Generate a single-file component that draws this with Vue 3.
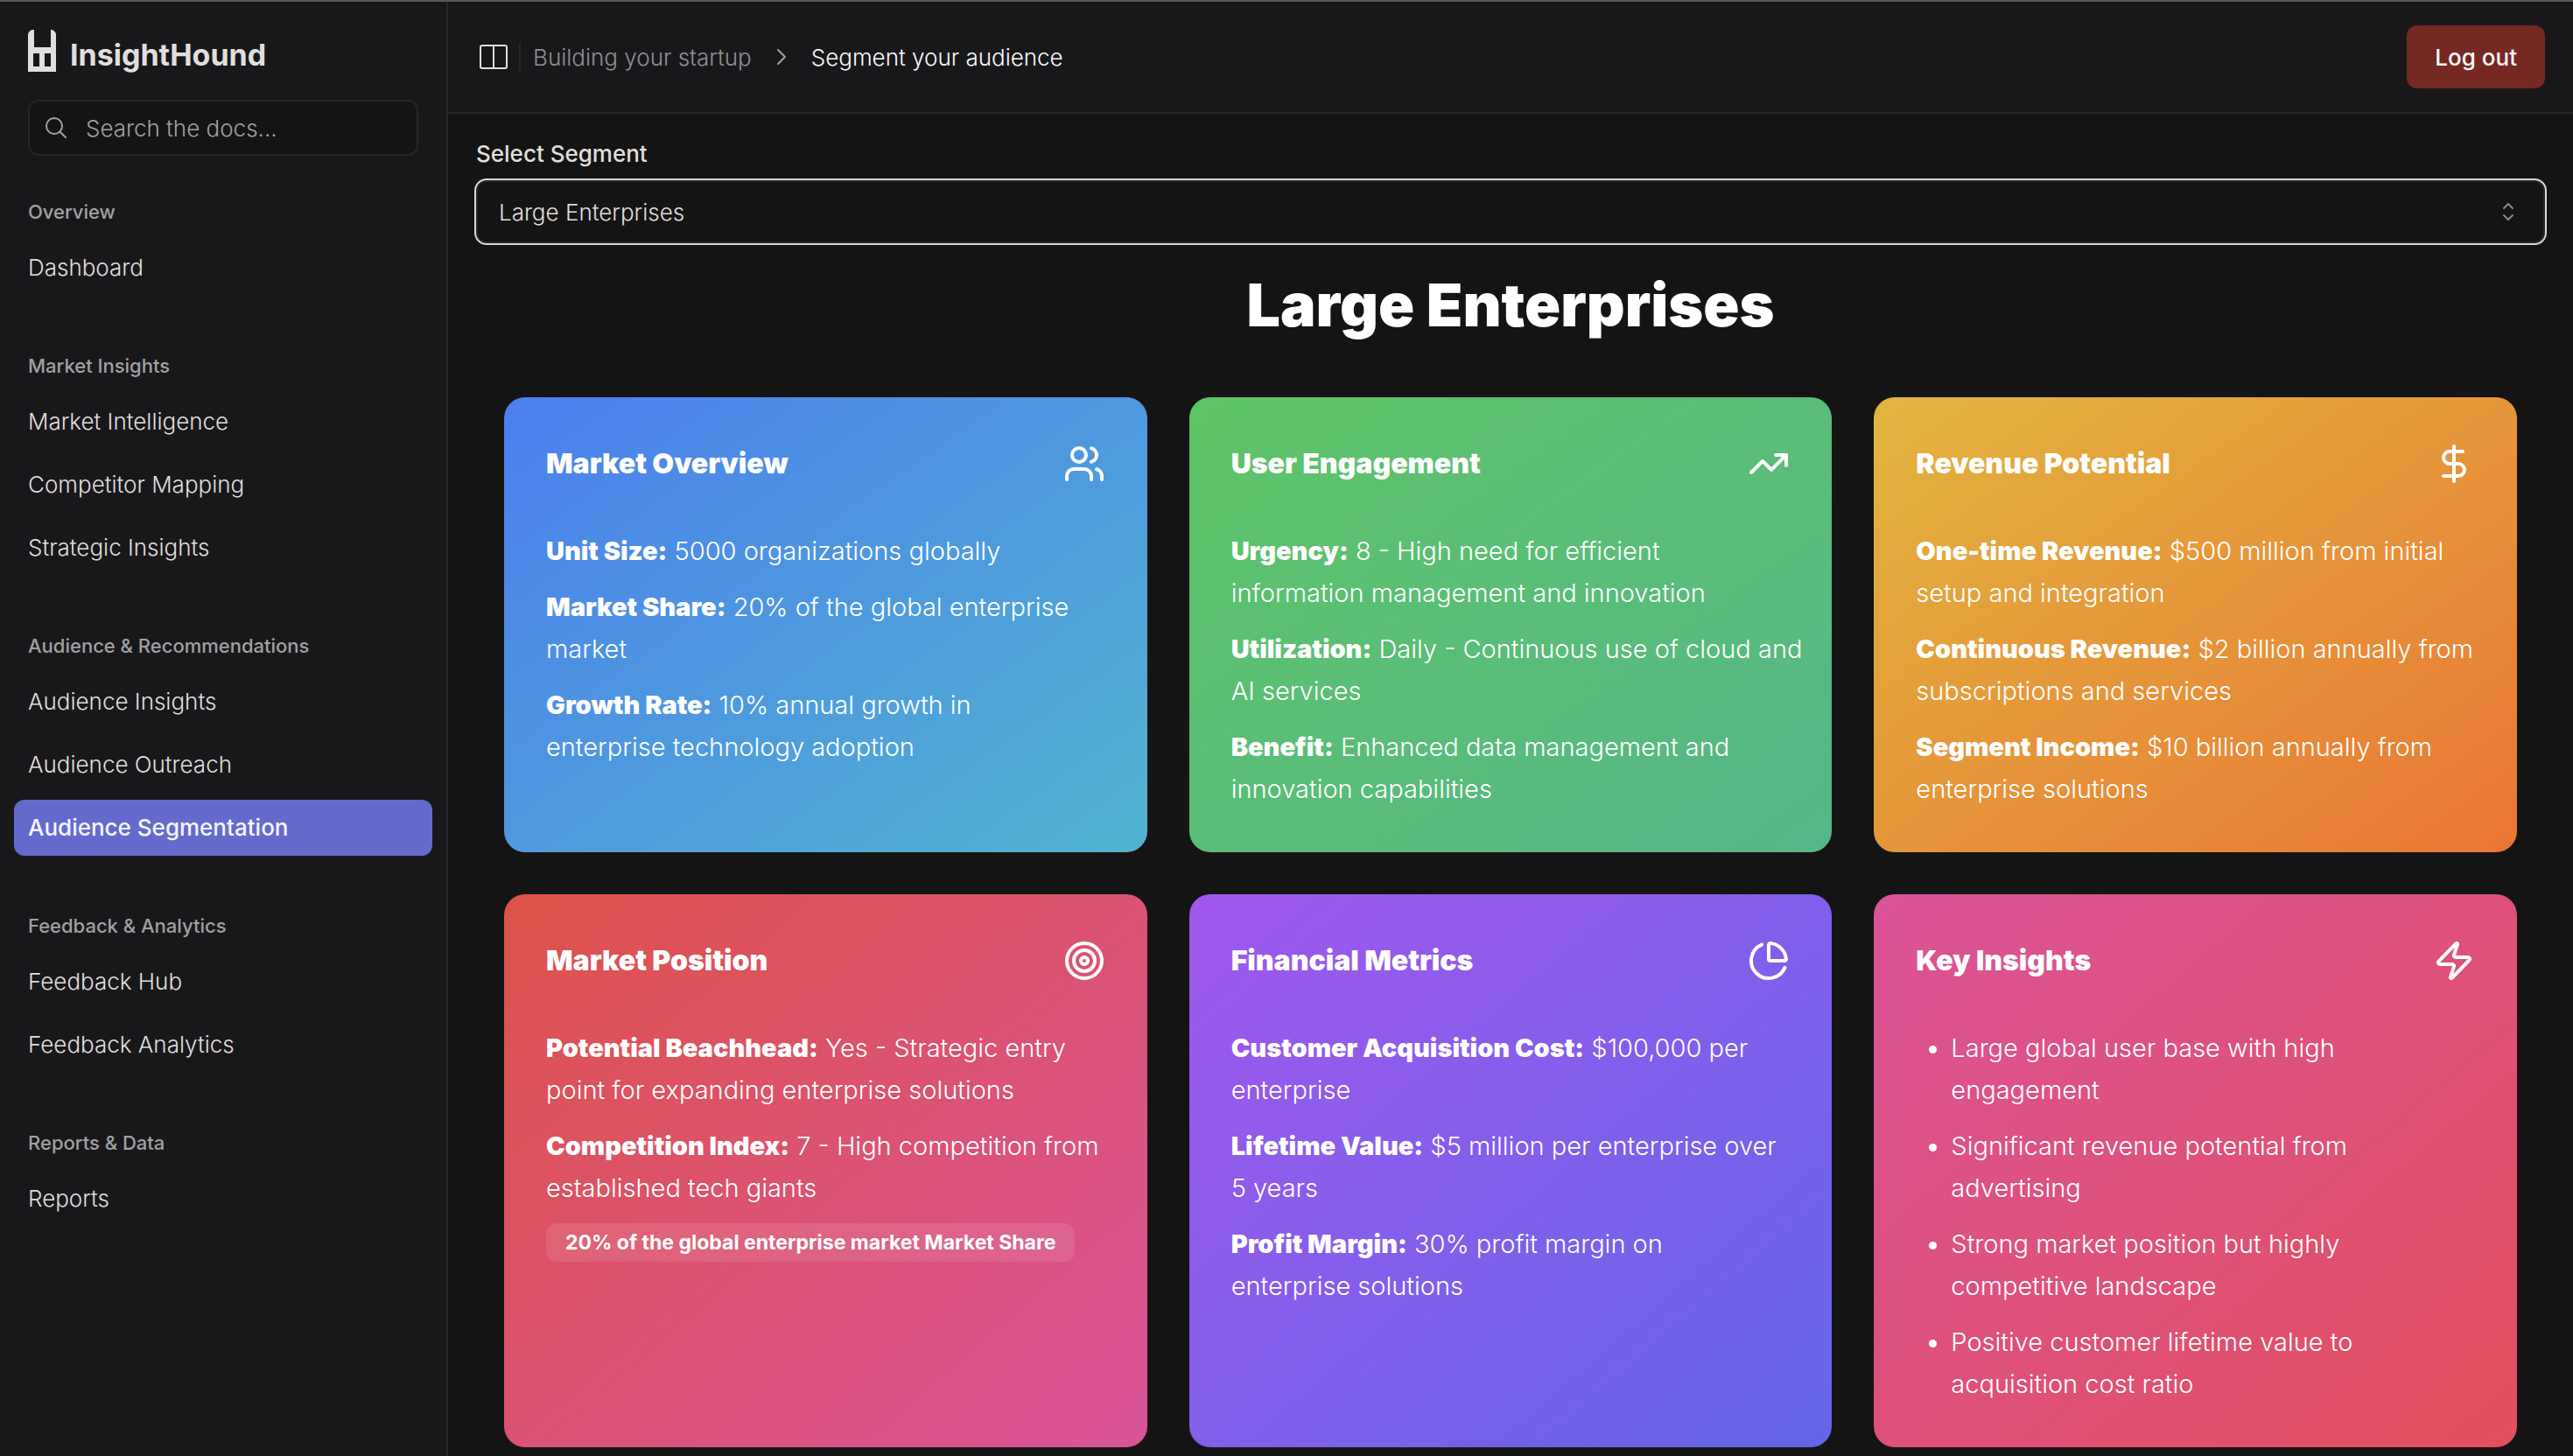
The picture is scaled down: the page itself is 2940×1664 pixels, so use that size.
<script setup>
import { ref } from 'vue'

const segment = ref('Large Enterprises')
const segments = ['Large Enterprises']
const search = ref('')

const nav = [
  { title: 'Overview', items: ['Dashboard'] },
  { title: 'Market Insights', items: ['Market Intelligence', 'Competitor Mapping', 'Strategic Insights'] },
  { title: 'Audience & Recommendations', items: ['Audience Insights', 'Audience Outreach', 'Audience Segmentation'] },
  { title: 'Feedback & Analytics', items: ['Feedback Hub', 'Feedback Analytics'] },
  { title: 'Reports & Data', items: ['Reports'] }
]
const current = 'Audience Segmentation'

const cards = [
  {
    title: 'Market Overview',
    tone: 'blue',
    icon: ['M16 21v-2a4 4 0 0 0-4-4H6a4 4 0 0 0-4 4v2', 'M9 3a4 4 0 1 0 0 8a4 4 0 1 0 0-8', 'M22 21v-2a4 4 0 0 0-3-3.87', 'M16 3.13a4 4 0 0 1 0 7.75'],
    facts: [
      ['Unit Size:', '5000 organizations globally'],
      ['Market Share:', '20% of the global enterprise\nmarket'],
      ['Growth Rate:', '10% annual growth in\nenterprise technology adoption']
    ]
  },
  {
    title: 'User Engagement',
    tone: 'green',
    icon: ['M22 7 13.5 15.5 8.5 10.5 2 17', 'M16 7h6v6'],
    facts: [
      ['Urgency:', '8 - High need for efficient\ninformation management and innovation'],
      ['Utilization:', 'Daily - Continuous use of cloud and\nAI services'],
      ['Benefit:', 'Enhanced data management and\ninnovation capabilities']
    ]
  },
  {
    title: 'Revenue Potential',
    tone: 'amber',
    icon: ['M12 2v20', 'M17 5H9.5a3.5 3.5 0 0 0 0 7h5a3.5 3.5 0 0 1 0 7H6'],
    facts: [
      ['One-time Revenue:', '$500 million from initial\nsetup and integration'],
      ['Continuous Revenue:', '$2 billion annually from\nsubscriptions and services'],
      ['Segment Income:', '$10 billion annually from\nenterprise solutions']
    ]
  },
  {
    title: 'Market Position',
    tone: 'red',
    icon: ['M12 2a10 10 0 1 0 0 20a10 10 0 1 0 0-20', 'M12 6a6 6 0 1 0 0 12a6 6 0 1 0 0-12', 'M12 10a2 2 0 1 0 0 4a2 2 0 1 0 0-4'],
    facts: [
      ['Potential Beachhead:', 'Yes - Strategic entry\npoint for expanding enterprise solutions'],
      ['Competition Index:', '7 - High competition from\nestablished tech giants']
    ],
    badge: '20% of the global enterprise market Market Share'
  },
  {
    title: 'Financial Metrics',
    tone: 'purple',
    icon: ['M21 12c.552 0 1.005-.449.95-.998a10 10 0 0 0-8.953-8.951c-.55-.055-.998.398-.998.95v8a1 1 0 0 0 1 1z', 'M21.21 15.89A10 10 0 1 1 8 2.83'],
    facts: [
      ['Customer Acquisition Cost:', '$100,000 per\nenterprise'],
      ['Lifetime Value:', '$5 million per enterprise over\n5 years'],
      ['Profit Margin:', '30% profit margin on\nenterprise solutions']
    ]
  },
  {
    title: 'Key Insights',
    tone: 'pink',
    icon: ['M4 14a1 1 0 0 1-.78-1.63l9.9-10.2a.5.5 0 0 1 .86.46l-1.92 6.02A1 1 0 0 0 13 10h7a1 1 0 0 1 .78 1.63l-9.9 10.2a.5.5 0 0 1-.86-.46l1.92-6.02A1 1 0 0 0 11 14z'],
    points: [
      'Large global user base with high engagement',
      'Significant revenue potential from advertising',
      'Strong market position but highly competitive landscape',
      'Positive customer lifetime value to acquisition cost ratio'
    ]
  }
]
</script>

<template>
  <div class="app">
    <aside class="sidebar">
      <a class="brand" href="#">
        <svg class="logo" viewBox="0 0 32 48" aria-hidden="true">
          <path fill="currentColor" fill-rule="evenodd" d="M0 5Q1 1 5 0H7V20H26V0H27Q31 1 32 5V48H0ZM6 27V42H13V27ZM19 27V42H26V27Z" />
        </svg>
        <span>InsightHound</span>
      </a>
      <div class="search">
        <svg viewBox="0 0 24 24" aria-hidden="true">
          <circle cx="10" cy="10" r="9" />
          <path d="m17 17 6 6" />
        </svg>
        <input v-model="search" type="text" aria-label="Search the docs" placeholder="Search the docs..." />
      </div>
      <nav class="nav">
        <section v-for="group in nav" :key="group.title" class="group">
          <h2>{{ group.title }}</h2>
          <ul>
            <li v-for="item in group.items" :key="item">
              <a href="#" :class="{ active: item === current }">{{ item }}</a>
            </li>
          </ul>
        </section>
      </nav>
    </aside>

    <div class="content">
      <header class="topbar">
        <button class="toggle" type="button" aria-label="Toggle sidebar">
          <svg viewBox="0 0 34 30" aria-hidden="true">
            <rect x="2" y="2" width="30" height="26" rx="2" />
            <path d="M17 2v26" />
          </svg>
        </button>
        <nav class="crumbs" aria-label="Breadcrumb">
          <a href="#">Building your startup</a>
          <svg viewBox="0 0 12 20" aria-hidden="true"><path d="m2 2 8 8-8 8" /></svg>
          <span>Segment your audience</span>
        </nav>
        <button class="logout" type="button">Log out</button>
      </header>

      <main class="main">
        <label class="field-label" for="segment">Select Segment</label>
        <div class="select">
          <select id="segment" v-model="segment">
            <option v-for="s in segments" :key="s">{{ s }}</option>
          </select>
          <svg viewBox="0 0 14 20" aria-hidden="true"><path d="m2 6 5-5 5 5M2 14l5 5 5-5" /></svg>
        </div>

        <h1>{{ segment }}</h1>

        <div class="cards">
          <article v-for="card in cards" :key="card.title" class="card" :class="card.tone">
            <header>
              <h3>{{ card.title }}</h3>
              <svg viewBox="0 0 24 24" aria-hidden="true">
                <path v-for="d in card.icon" :key="d" :d="d" />
              </svg>
            </header>
            <div v-if="card.facts" class="facts">
              <p v-for="fact in card.facts" :key="fact[0]"><strong>{{ fact[0] }}</strong> {{ fact[1] }}</p>
              <span v-if="card.badge" class="badge">{{ card.badge }}</span>
            </div>
            <ul v-else class="points">
              <li v-for="point in card.points" :key="point">{{ point }}</li>
            </ul>
          </article>
        </div>
      </main>
    </div>
  </div>
</template>

<style>
body {
  background: #141414;
}
</style>

<style scoped>
* {
  box-sizing: border-box;
}
.app {
  display: flex;
  min-height: 100vh;
  border-top: 2px solid #58585a;
  background: #141414;
  color: #e0dfdd;
  font-family: Inter, "Liberation Sans", sans-serif;
  font-size: 26px;
  font-weight: 300;
}
h1, h2, h3, p, ul {
  margin: 0;
  padding: 0;
}
a {
  color: inherit;
  text-decoration: none;
}
button, input, select {
  font: inherit;
  color: inherit;
}
svg {
  flex: none;
  fill: none;
  stroke: currentColor;
  stroke-width: 2;
  stroke-linecap: round;
  stroke-linejoin: round;
}

.sidebar {
  flex: 0 0 512px;
  min-width: 0;
  padding: 32px 16px;
  border-right: 2px solid #27272a;
  background: #18181b;
}
.brand {
  display: flex;
  align-items: flex-end;
  gap: 16px;
  height: 48px;
  padding: 0 16px;
  font-size: 34px;
  line-height: 38px;
  font-weight: 700;
}
.logo {
  width: 32px;
  height: 48px;
  stroke: none;
}
.search {
  display: flex;
  align-items: center;
  gap: 22px;
  height: 64px;
  margin: 32px 16px;
  padding: 0 18px;
  border: 2px solid #27272a;
  border-radius: 12px;
  background: #141414;
  color: #a1a1a1;
}
.search svg {
  width: 24px;
  height: 24px;
}
.search input {
  flex: 1;
  min-width: 0;
  padding: 0;
  border: 0;
  outline: 0;
  background: none;
}
.search input::placeholder {
  color: #a1a1a1;
  opacity: 1;
}
.nav {
  display: flex;
  flex-direction: column;
  gap: 48px;
}
.group h2 {
  padding: 0 16px;
  font-size: 22px;
  line-height: 64px;
  font-weight: 500;
  color: #a1a1a1;
}
.group ul {
  display: flex;
  flex-direction: column;
  gap: 8px;
  list-style: none;
}
.group a {
  display: block;
  padding: 0 16px;
  border-radius: 12px;
  line-height: 64px;
}
.group a.active {
  background: #646acb;
  color: #f4f6ff;
  font-weight: 500;
}

.content {
  flex: 1;
  min-width: 0;
}
.topbar {
  display: flex;
  align-items: center;
  height: 128px;
  padding: 0 32px;
  border-bottom: 2px solid #27272a;
  background: #18181b;
}
.toggle {
  display: flex;
  align-items: center;
  height: 32px;
  padding: 0 12px 0 3px;
  border: 0;
  border-right: 2px solid #27272a;
  background: none;
}
.toggle svg {
  width: 34px;
  height: 30px;
}
.crumbs {
  display: flex;
  align-items: center;
  gap: 28px;
  margin: 0 auto 0 14px;
  color: #fafafa;
}
.crumbs a {
  color: #8f8f96;
}
.crumbs svg {
  width: 12px;
  height: 20px;
  color: #a1a1a1;
}
.logout {
  height: 72px;
  padding: 0 32px;
  border: 0;
  border-radius: 12px;
  background: #762822;
  color: #fafafa;
  font-weight: 500;
}

.main {
  padding: 28px 32px 8px;
}
.field-label {
  display: block;
  line-height: 36px;
  font-weight: 500;
}
.select {
  position: relative;
  margin-top: 12px;
}
.select select {
  display: block;
  width: 100%;
  height: 72px;
  padding: 0 24px;
  border: 2px solid #27272a;
  border-radius: 12px;
  outline: 2px solid #d8d8d6;
  background: #141414;
  appearance: none;
}
.select svg {
  position: absolute;
  top: 26px;
  right: 35px;
  width: 14px;
  height: 20px;
  color: #8a8a88;
  pointer-events: none;
}
h1 {
  margin: 30px 0 66px;
  font-size: 68px;
  line-height: 80px;
  font-weight: 900;
  text-align: center;
  color: #fff;
}

.cards {
  display: grid;
  grid-template-columns: repeat(3, minmax(0, 1fr));
  gap: 48px;
  padding: 0 32px;
}
.card {
  padding: 48px;
  border-radius: 24px;
  color: #fff;
  font-size: 29px;
  line-height: 48px;
}
.card header {
  display: flex;
  align-items: center;
  justify-content: space-between;
  margin-bottom: 48px;
}
.card h3 {
  font-size: 32px;
  line-height: 56px;
  font-weight: 900;
}
.card header svg {
  width: 48px;
  height: 48px;
}
.facts {
  display: flex;
  flex-direction: column;
  align-items: flex-start;
  gap: 16px;
  margin-right: -32px;
  white-space: pre-line;
}
.facts strong {
  font-weight: 900;
}
.badge {
  padding: 0 22px;
  border-radius: 12px;
  background: rgba(255, 255, 255, 0.1);
  font-size: 23px;
  line-height: 44px;
  font-weight: 700;
}
.points {
  display: flex;
  flex-direction: column;
  gap: 16px;
  padding: 0 40px;
}
.blue { background: linear-gradient(to bottom right, #4c7fee, #50b3cf); }
.green { background: linear-gradient(to bottom right, #5ec466, #55b688); }
.amber { background: linear-gradient(to bottom right, #e2b53f, #e97634); }
.red { background: linear-gradient(to bottom right, #dd5249, #d9539a); }
.purple { background: linear-gradient(to bottom right, #a157ec, #6366e8); }
.pink { background: linear-gradient(to bottom right, #da5399, #e24f5c); }
</style>
